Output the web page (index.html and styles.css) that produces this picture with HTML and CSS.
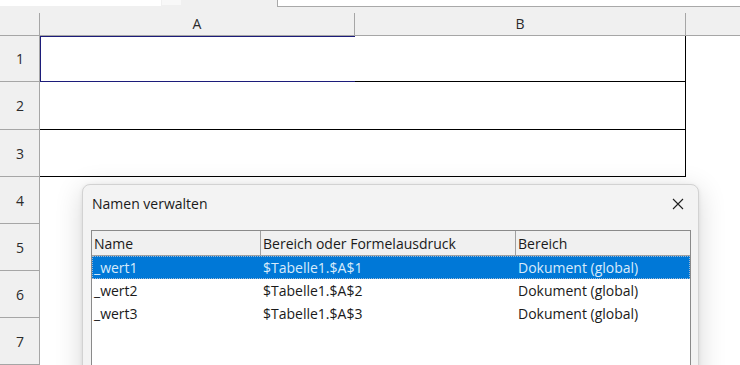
FILE: index.html
```html
<!DOCTYPE html>
<html lang="de">
<head>
<meta charset="utf-8">
<title>Namen verwalten</title>
<link rel="stylesheet" href="styles.css">
</head>
<body>
<div class="app">
  <div class="toolbar">
    <div class="namebox"></div>
    <div class="namebtn"></div>
    <div class="formula"></div>
  </div>
  <div class="sheet">
    <div class="colheads">
      <div class="corner"></div>
      <div class="colhead cola">A</div>
      <div class="colhead colb">B</div>
      <div class="colhead rest"></div>
    </div>
    <div class="row h46">
      <div class="rowhead">1</div>
      <div class="cell a boxed cursor"></div>
      <div class="cell b boxed"></div>
      <div class="cell rest"></div>
    </div>
    <div class="row h48">
      <div class="rowhead">2</div>
      <div class="cell a boxed"></div>
      <div class="cell b boxed"></div>
      <div class="cell rest"></div>
    </div>
    <div class="row h47">
      <div class="rowhead">3</div>
      <div class="cell a boxed"></div>
      <div class="cell b boxed"></div>
      <div class="cell rest"></div>
    </div>
    <div class="row h47"><div class="rowhead">4</div><div class="cell fill"></div></div>
    <div class="row h47"><div class="rowhead">5</div><div class="cell fill"></div></div>
    <div class="row h47"><div class="rowhead">6</div><div class="cell fill"></div></div>
    <div class="row h47"><div class="rowhead">7</div><div class="cell fill"></div></div>
  </div>

  <div class="dialog">
    <div class="dlg-title">
      <span>Namen verwalten</span>
      <svg class="close" width="12" height="12" viewBox="0 0 12 12"><path d="M1 1 L11 11 M11 1 L1 11" stroke="#1f1f1f" stroke-width="1.1" fill="none"/></svg>
    </div>
    <div class="list">
      <div class="lrow lhead">
        <div class="c1">Name</div>
        <div class="c2">Bereich oder Formelausdruck</div>
        <div class="c3">Bereich</div>
      </div>
      <div class="lrow sel">
        <div class="c1">_wert1</div>
        <div class="c2">$Tabelle1.$A$1</div>
        <div class="c3">Dokument (global)</div>
      </div>
      <div class="lrow">
        <div class="c1">_wert2</div>
        <div class="c2">$Tabelle1.$A$2</div>
        <div class="c3">Dokument (global)</div>
      </div>
      <div class="lrow">
        <div class="c1">_wert3</div>
        <div class="c2">$Tabelle1.$A$3</div>
        <div class="c3">Dokument (global)</div>
      </div>
    </div>
  </div>
</div>
</body>
</html>
```
FILE: styles.css
```css
* { box-sizing: border-box; }
html, body { margin: 0; padding: 0; }
body {
  width: 740px;
  height: 365px;
  overflow: hidden;
  background: #ffffff;
  font-family: "Open Sans", "Noto Sans", "Liberation Sans", sans-serif;
  color: #1a1a1a;
}
.app { position: relative; width: 740px; height: 365px; overflow: hidden; }

.toolbar {
  height: 13px;
  background: #f0f0f0;
  display: flex;
  align-items: flex-start;
}
.namebox { width: 161px; height: 6px; background: #ffffff; }
.namebtn { width: 19px; height: 5px; margin-left: 1px; background: #f8f8f8; }
.formula {
  margin-left: 96px;
  flex: 1;
  height: 7px;
  background: #ffffff;
  border-left: 1px solid #a9a9a9;
  border-bottom: 1px solid #a9a9a9;
}

.sheet { display: flex; flex-direction: column; }
.colheads {
  display: flex;
  height: 23px;
  background: #f0f0f0;
  border-bottom: 1px solid #a6a6a6;
}
.corner { width: 40px; border-right: 1px solid #a6a6a6; }
.colhead {
  font-size: 14px;
  color: #2b2b2b;
  text-align: center;
  line-height: 22px;
}
.cola { width: 315px; border-right: 1px solid #a6a6a6; }
.colb { width: 331px; border-right: 1px solid #a6a6a6; }
.rest { flex: 1; }

.row { display: flex; }
.h46 { height: 46px; }
.h47 { height: 47px; }
.h48 { height: 48px; }
.rowhead {
  width: 40px;
  background: #f0f0f0;
  border-right: 1px solid #a6a6a6;
  border-bottom: 1px solid #a6a6a6;
  font-size: 14px;
  color: #2b2b2b;
  display: flex;
  align-items: center;
  justify-content: center;
  padding-left: 1px;
}
.cell { background: #ffffff; }
.cell.a { width: 315px; }
.cell.b { width: 331px; }
.cell.fill { flex: 1; }
.boxed { border-bottom: 1px solid #000000; }
.cell.b.boxed { border-right: 1px solid #000000; }
.cursor {
  border-top: 1px solid #1c1c7a;
  border-left: 1px solid #1c1c7a;
  border-bottom: 1px solid #1c1c7a;
}

.dialog {
  position: absolute;
  left: 82px;
  top: 184px;
  width: 617px;
  height: 240px;
  background: #f3f3f3;
  border: 1px solid #d2d2d2;
  border-radius: 8px;
  box-shadow: 0 6px 28px rgba(0,0,0,0.16), 0 1px 4px rgba(0,0,0,0.08);
  padding: 0 8px 0 8px;
}
.dlg-title {
  height: 45px;
  display: flex;
  align-items: center;
  justify-content: space-between;
  padding-left: 1px;
  padding-right: 6px;
  padding-bottom: 8px;
  font-size: 14px;
  color: #1a1a1a;
}
.close { display: block; }

.list {
  width: 600px;
  height: 200px;
  background: #ffffff;
  border: 1px solid #8a8a8a;
  border-bottom: none;
  font-size: 14px;
}
.lrow { display: flex; height: 23px; align-items: center; }
.lrow > div { padding-left: 2px; white-space: nowrap; }
.c1 { width: 169px; }
.c2 { width: 255px; }
.c3 { flex: 1; }
.lhead {
  height: 25px;
  background: #f0f0f0;
  border-bottom: 1px solid #a0a0a0;
}
.lhead > div { height: 100%; display: flex; align-items: center; }
.lhead .c1, .lhead .c2 { border-right: 1px solid #a0a0a0; }
.sel {
  background: #0078d7;
  color: #d8ebfb;
  outline: 1px dotted #9fb9d4;
  outline-offset: -1px;
}
```
